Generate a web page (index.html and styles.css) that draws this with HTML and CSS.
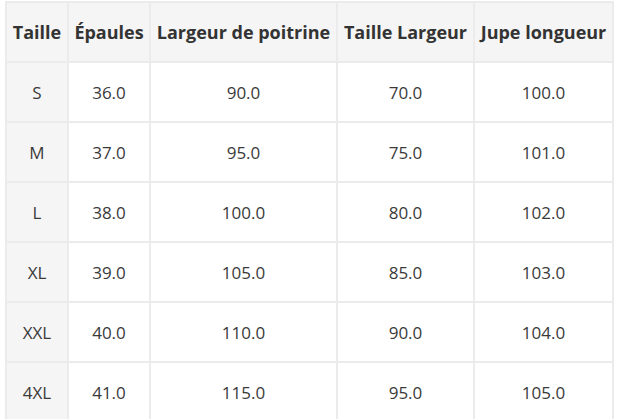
FILE: index.html
```html
<!DOCTYPE html>
<html lang="fr">
<head>
<meta charset="utf-8">
<title>Tableau des tailles</title>
<link rel="stylesheet" href="styles.css">
</head>
<body>
<table class="size-table">
  <colgroup>
    <col class="c1"><col class="c2"><col class="c3"><col class="c4"><col class="c5">
  </colgroup>
  <thead>
    <tr><th>Taille</th><th>Épaules</th><th>Largeur de poitrine</th><th>Taille Largeur</th><th>Jupe longueur</th></tr>
  </thead>
  <tbody>
    <tr><td class="size">S</td><td>36.0</td><td>90.0</td><td>70.0</td><td>100.0</td></tr>
    <tr><td class="size">M</td><td>37.0</td><td>95.0</td><td>75.0</td><td>101.0</td></tr>
    <tr><td class="size">L</td><td>38.0</td><td>100.0</td><td>80.0</td><td>102.0</td></tr>
    <tr><td class="size">XL</td><td>39.0</td><td>105.0</td><td>85.0</td><td>103.0</td></tr>
    <tr><td class="size">XXL</td><td>40.0</td><td>110.0</td><td>90.0</td><td>104.0</td></tr>
    <tr><td class="size">4XL</td><td>41.0</td><td>115.0</td><td>95.0</td><td>105.0</td></tr>
  </tbody>
</table>
</body>
</html>
```
FILE: styles.css
```css
html, body {
  margin: 0;
  padding: 0;
  background: #fff;
}
body {
  font-family: "Open Sans", "Liberation Sans", sans-serif;
  font-size: 17px;
  color: #333;
}
.size-table {
  margin: 1px 0 0 5px;
  border-collapse: collapse;
  table-layout: fixed;
  width: 607px;
}
.c1 { width: 62px; }
.c2 { width: 82px; }
.c3 { width: 187px; }
.c4 { width: 137px; }
.c5 { width: 139px; }
.size-table th,
.size-table td {
  border: 2px solid #ebebeb;
  text-align: center;
  vertical-align: middle;
  padding: 0;
  height: 60px;
  box-sizing: border-box;
  white-space: nowrap;
}
.size-table th {
  background: #f5f5f5;
  font-weight: 700;
  font-size: 18px;
  color: #333;
}
.size-table td {
  color: #3a3a3a;
}
.size-table td.size {
  background: #f5f5f5;
}
```
